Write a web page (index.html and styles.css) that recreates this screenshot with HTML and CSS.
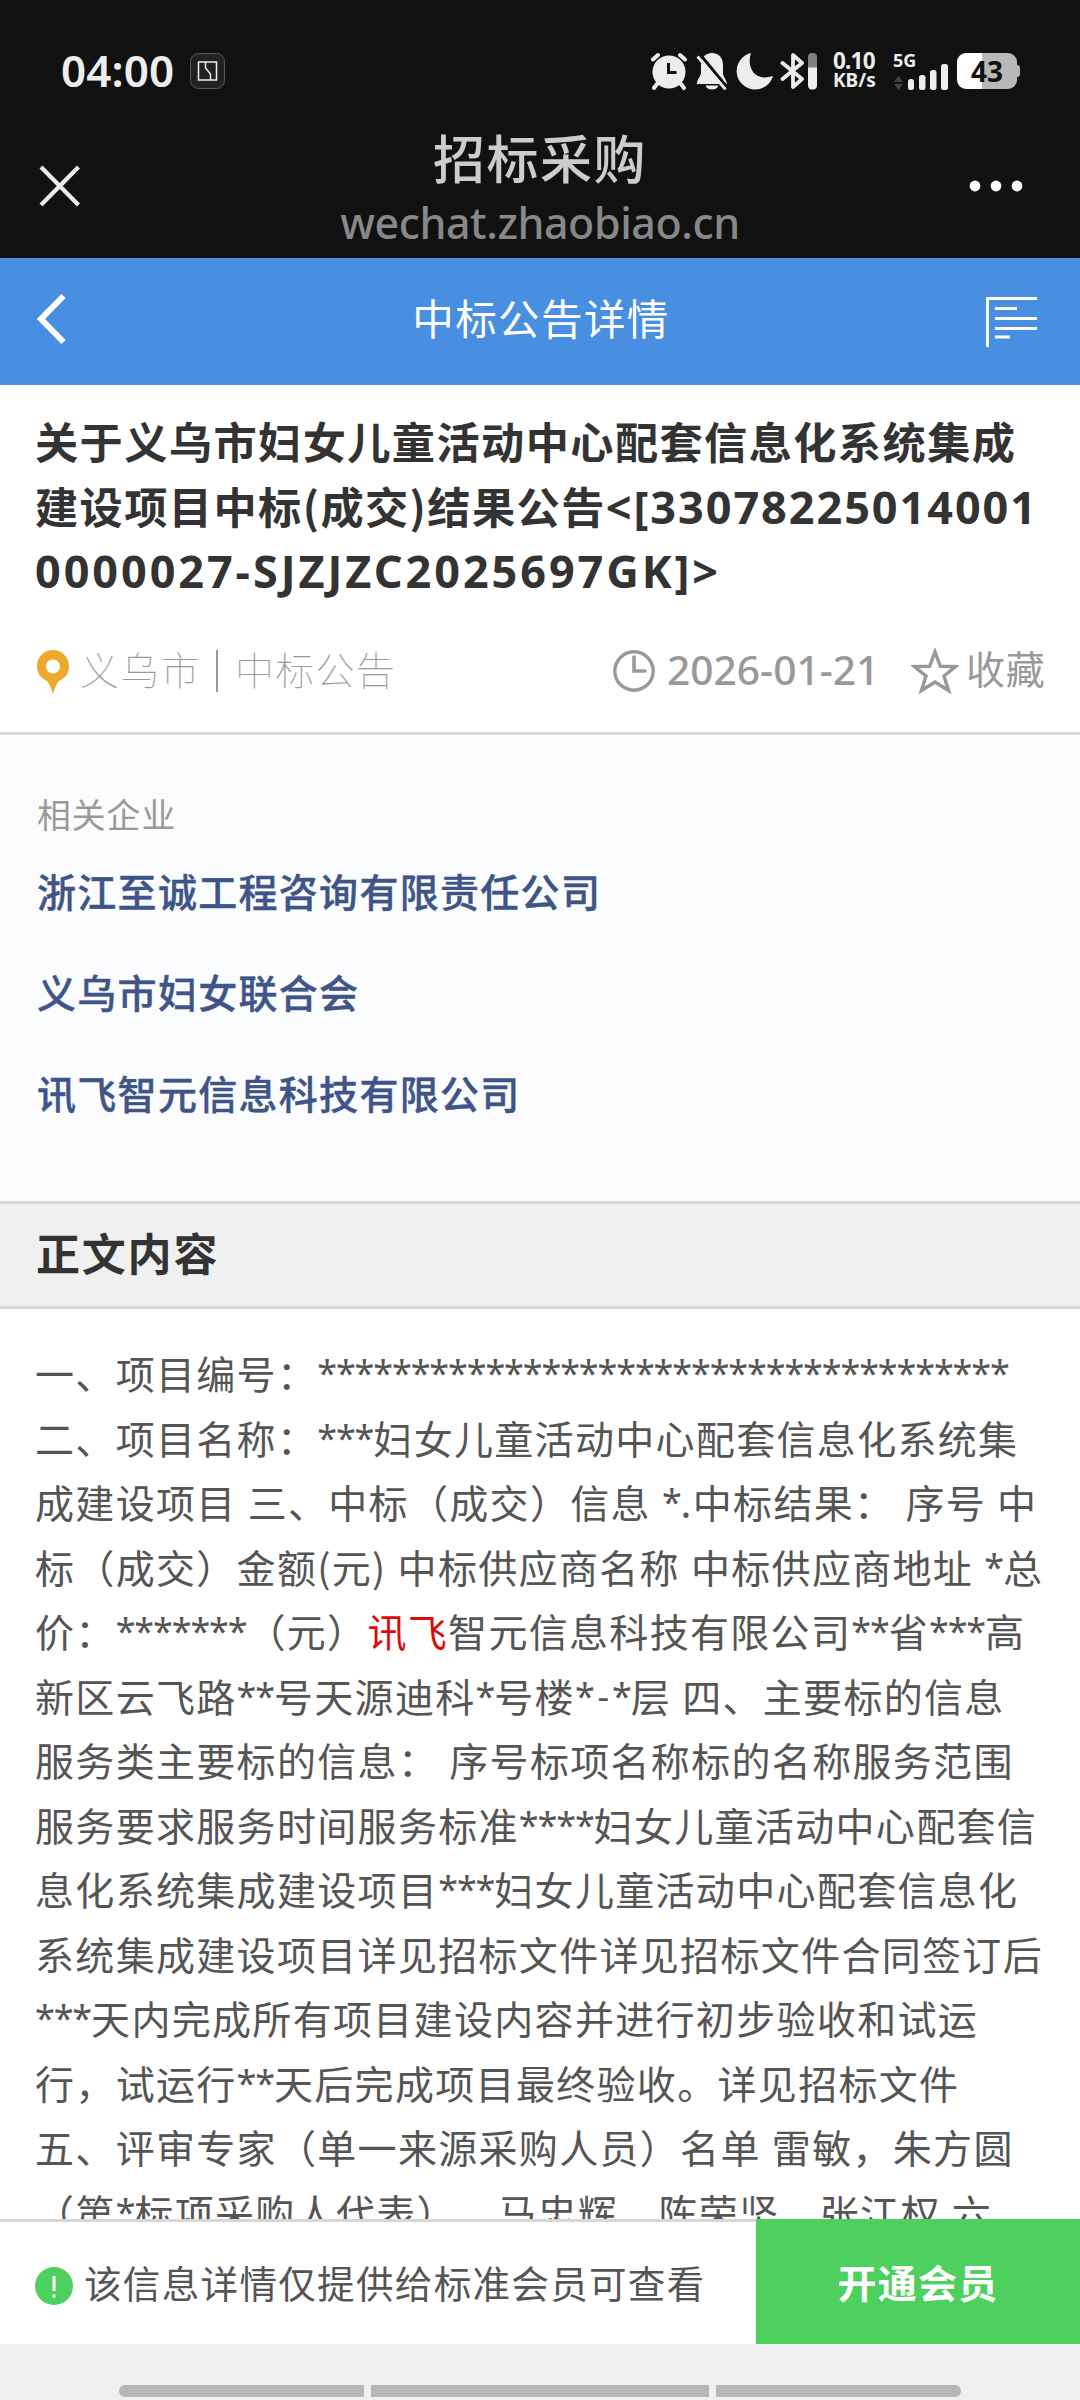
FILE: index.html
```html
<!DOCTYPE html>
<html lang="zh-CN">
<head>
<meta charset="utf-8">
<title>中标公告详情</title>
<link rel="stylesheet" href="styles.css">
</head>
<body>
<div class="phone">
  <div class="status">
    <span class="time">04:00</span>
    <svg class="badge" width="36" height="36" viewBox="0 0 36 36" fill="none"><rect x=".5" y=".5" width="34" height="35" rx="8" fill="#222" stroke="#5a5a5a"/><path d="M8.500 9h18v18h-18zM15.500 9v6l5 6v6" stroke="#eee" stroke-width="1.500"/></svg>
    <div class="tray">
      <svg width="38" height="38" viewBox="0 0 38 38" fill="none" stroke="#ededed"><circle cx="19" cy="20" r="16.500" fill="#ededed" stroke="none"/><path d="M3 7.500l5-4.500M35 7.500l-5-4.500M7 32l-3 4M31 32l3 4" stroke-width="4" stroke-linecap="round"/><path d="M18.500 11v9.500h8" stroke="#111" stroke-width="3"/></svg>
      <svg class="bell" width="32" height="38" viewBox="0 0 32 38"><path d="M16 1c7 0 11 5 11 12v8c0 4 3 5 4 11H1c0-5 3-6 4-11v-8C5 6 9 1 16 1zM9.500 33.500h13c-1 3-4 4-6.500 4s-5.500-1-6.500-4z" fill="#ededed"/><path d="M4.500 3l28 34" stroke="#111" stroke-width="3"/><path d="M1.500 4.500l28 33" stroke="#ededed" stroke-width="2.800"/></svg>
      <svg class="moon" width="38" height="38" viewBox="0 0 38 38"><path d="M15 1a18.500 18.500 0 1 0 22 23C28 27 20 25 16.500 19 13 13 13 7 15 1z" fill="#ededed"/></svg>
      <svg class="bt" width="38" height="38" viewBox="0 0 38 38" fill="none"><path d="M2.500 11l19.500 16-9 8V3l9 8L2.500 27" stroke="#ededed" stroke-width="3.800" stroke-linejoin="round" stroke-linecap="round"/><rect x="28" y="1" width="9" height="36.500" rx="4" fill="#808080"/><path d="M28 15.500h9V33a4.500 4.500 0 0 1-9 0z" fill="#ededed"/></svg>
      <div class="speed"><span>0.10</span><span class="unit">KB/s</span></div>
      <div class="signal">
        <span>5G</span>
        <svg width="56" height="38" viewBox="0 0 56 38"><path d="M1 30l4.500-6 4.500 6zM1 32l4.500 6 4.500-6z" fill="#444"/><g fill="#ededed"><rect x="15" y="27" width="6" height="11" rx="2.500"/><rect x="26" y="23" width="6.500" height="15" rx="2.500"/><rect x="37" y="18" width="6.500" height="20" rx="2.500"/><rect x="48" y="12" width="7" height="26" rx="2.500"/></g></svg>
      </div>
      <div class="battery"><span>43</span></div>
    </div>
  </div>
  <div class="wechat">
    <svg class="close" width="44" height="44" viewBox="0 0 44 44"><path d="M3 3l37.500 38M40.500 3L3 41" stroke="#ebebeb" stroke-width="4.200"/></svg>
    <div class="site"><div class="site-name">招标采购</div><div class="site-url">wechat.zhaobiao.cn</div></div>
    <svg class="more" width="56" height="12" viewBox="0 0 56 12" fill="#fff"><circle cx="7" cy="6" r="5.400"/><circle cx="28" cy="6" r="5.400"/><circle cx="49" cy="6" r="5.400"/></svg>
  </div>
  <div class="nav">
    <svg width="32" height="54" viewBox="0 0 32 54"><path d="M27.500 4L5 27l22.500 23" fill="none" stroke="#fff" stroke-width="6"/></svg>
    <h1>中标公告详情</h1>
    <svg class="menu" width="52" height="50" viewBox="0 0 52 50" fill="none" stroke="#fff"><path d="M1.500 50V1.500H51" stroke-width="2.800"/><path d="M9 11.500h22M9 21.500h42M9 31.500h42M9 40h15" stroke-width="2.800"/></svg>
  </div>
  <div class="head">
    <h2><span>关于义乌市妇女儿童活动中心配套信息化系统集成</span><span>建设项目中标(成交)结果公告<b>&lt;[33078225014001</b></span><span><b class="l3">0000027-SJZJZC2025697GK]&gt;</b></span></h2>
    <div class="meta">
      <svg class="pin" width="34" height="46" viewBox="0 0 34 46"><path fill-rule="evenodd" d="M17 1C8 1 1 8 1 17c0 8 4 12 10 15 3 3 4 7 6 13 2-6 3-10 6-13 6-3 10-7 10-15C33 8 26 1 17 1zm0 9.500a7 7 0 1 1 0 14 7 7 0 0 1 0-14z" fill="#eda92d"/></svg>
      <span class="place">义乌市<i></i>中标公告</span>
      <svg class="clock" width="42" height="44" viewBox="0 0 42 44" fill="none" stroke="#999"><circle cx="21" cy="22" r="19.200" stroke-width="3.400"/><path d="M21 8v14h11" stroke-width="3.600" stroke-linecap="round"/></svg>
      <span class="date">2026-01-21</span>
      <svg class="star" width="48" height="46" viewBox="0 0 48 46"><path d="M24 4l5.400 14.300 15.100.300-11.500 9.400 4.500 14.500L24 34l-13.500 8.500L15 28 3.500 18.600l15.100-.300z" fill="none" stroke="#999" stroke-width="3.500"/></svg>
      <span class="fav">收藏</span>
    </div>
  </div>
  <div class="related">
    <div class="label">相关企业</div>
    <a>浙江至诚工程咨询有限责任公司</a>
    <a>义乌市妇女联合会</a>
    <a>讯飞智元信息科技有限公司</a>
  </div>
  <div class="section">正文内容</div>
  <div class="content">
    <p>一、项目编号：<s>*************************************</s></p>
    <p>二、项目名称：<s>***</s>妇女儿童活动中心配套信息化系统集</p>
    <p>成建设项目 三、中标（成交）信息 <s>*</s>.中标结果： 序号 中</p>
    <p>标（成交）金额(元) 中标供应商名称 中标供应商地址 <s>*</s>总</p>
    <p>价：<s>*******</s>（元）<em>讯飞</em>智元信息科技有限公司<s>**</s>省<s>***</s>高</p>
    <p>新区云飞路<s>**</s>号天源迪科<s>*</s>号楼<s>*<u>-</u>*</s>层 四、主要标的信息</p>
    <p>服务类主要标的信息： 序号标项名称标的名称服务范围</p>
    <p>服务要求服务时间服务标准<s>****</s>妇女儿童活动中心配套信</p>
    <p>息化系统集成建设项目<s>***</s>妇女儿童活动中心配套信息化</p>
    <p>系统集成建设项目详见招标文件详见招标文件合同签订后</p>
    <p><s>***</s>天内完成所有项目建设内容并进行初步验收和试运</p>
    <p>行，试运行<s>**</s>天后完成项目最终验收。详见招标文件</p>
    <p>五、评审专家（单一来源采购人员）名单 雷敏，朱方圆</p>
    <p>（第<s>*</s>标项采购人代表），马忠辉，陈荣坚，张江权 六</p>
  </div>
  <div class="vip">
    <div class="tip"><svg width="38" height="38" viewBox="0 0 38 38"><circle cx="19" cy="19" r="19" fill="#4dd05d"/><path d="M19 9v15M19 27.500v3" stroke="#fff" stroke-width="3"/></svg><span>该信息详情仅提供给标准会员可查看</span></div>
    <div class="open">开通会员</div>
  </div>
  <div class="gesture"><i></i><i></i><i></i></div>
</div>
</body>
</html>
```
FILE: styles.css
```css
* { box-sizing: border-box; margin: 0; padding: 0; }
body { width: 1080px; height: 2400px; overflow: hidden; background: #fff; font-family: "Noto Sans CJK SC", sans-serif; text-spacing-trim: space-all; }
svg { display: block; flex: none; }
.phone { display: flex; flex-direction: column; width: 1080px; height: 2400px; white-space: nowrap; }
.phone > div { flex: none; }

.status { display: flex; align-items: center; height: 112px; padding: 30px 60px 0 61px; background: #111; color: #ededed; font-family: "Noto Sans", sans-serif; }
.time { width: 129px; font-size: 44px; font-weight: 600; line-height: 50px; letter-spacing: .1px; margin-top: -3px; }
.tray { display: flex; align-items: center; height: 38px; margin-left: auto; }
.bell { margin-left: 8px; }
.moon { margin-left: 8px; }
.bt { margin-left: 6px; }
.speed { display: flex; flex-direction: column; width: 75px; margin-top: -2px; padding-left: 15px; font-size: 22.500px; font-weight: 700; line-height: 20px; letter-spacing: -.8px; }
.unit { font-size: 19px; line-height: 19px; letter-spacing: 0; }
.signal { position: relative; width: 56px; }
.signal span { position: absolute; top: 0; left: 0; font-size: 18px; font-weight: 700; line-height: 16px; }
.battery { position: relative; width: 60px; height: 36px; margin: 0 3px 0 8px; border-radius: 9px; background: linear-gradient(90deg, #fff 25px, #b8b8b8 25px); color: #111; font-size: 28px; font-weight: 700; line-height: 36px; text-align: center; }
.battery::after { content: ""; position: absolute; right: -3px; top: 12px; width: 4px; height: 12px; border-radius: 0 3px 3px 0; background: #b8b8b8; }

.wechat { display: grid; grid-template-columns: 1fr auto 1fr; align-items: center; height: 146px; padding: 2px 56px 0 38px; background: #111; }
.site { margin-left: 18px; padding-top: 8px; text-align: center; }
.site-name { color: #ccc; font-size: 52px; font-weight: 500; line-height: 66px; letter-spacing: 1.500px; }
.site-url { color: #888; font-family: "Noto Sans", sans-serif; font-size: 43px; font-weight: 500; line-height: 66px; letter-spacing: -.450px; }
.more { justify-self: end; }

.nav { display: grid; grid-template-columns: 1fr auto 1fr; align-items: center; height: 127px; padding: 0 42px 5px 36px; background: #488fe1; color: #fff; }
.nav h1 { margin: -4px 0 0 8px; font-size: 41.500px; font-weight: 400; line-height: 60px; letter-spacing: 1.400px; }
.menu { justify-self: end; margin-top: 6px; }

.head { height: 350px; padding: 23px 36px 0 35px; border-bottom: 3px solid #d7d7d7; }
.head h2 { color: #333; font-size: 43.200px; font-weight: 700; line-height: 64.500px; letter-spacing: 1.420px; }
.head h2 span { display: block; height: 64.500px; }
.head b { font-family: "Noto Sans", sans-serif; font-size: 45px; font-weight: 700; line-height: 60px; letter-spacing: 1.950px; }
.head .l3 { letter-spacing: 2.920px; }
.meta { display: flex; align-items: center; height: 60px; margin-top: 39px; color: #999; font-size: 39px; line-height: 60px; }
.pin { margin: 3px 0 0 1px; }
.place { display: flex; align-items: center; margin: -6px 0 0 10px; font-weight: 100; letter-spacing: 1.300px; height: 54px; line-height: 54px; }
.place i { width: 2px; height: 42px; margin: 6px 17px 0 15px; background: #999; }
.clock { margin-left: auto; }
.date { width: 256px; margin-top: -3px; padding-left: 12px; font-family: "Noto Sans", sans-serif; font-size: 40.700px; font-weight: 500; }
.fav { margin-left: 7px; letter-spacing: .8px; height: 60px; line-height: 56px; width: 78px; margin-top: -3px; }

.related { display: flex; flex-direction: column; height: 469px; padding: 54px 37px 0; border-bottom: 3px solid #d7d7d7; background: #fbfcfe; }
.label { margin-bottom: 1px; color: #999; font-size: 33.800px; line-height: 50px; letter-spacing: 1px; }
.related a { color: #3f5587; font-size: 39px; font-weight: 500; line-height: 101px; letter-spacing: 1.300px; -webkit-text-stroke: .4px #3f5587; }
.section { height: 105px; padding-left: 36px; border-bottom: 3px solid #d7d7d7; background: #f0f0f0; color: #333; font-size: 44px; font-weight: 700; line-height: 96px; letter-spacing: 1.800px; }

.phone > .content { flex: 1 1 0; min-height: 0; overflow: hidden; padding: 31px 30px 0 35px; color: #555; font-size: 39px; letter-spacing: 1.320px; word-spacing: 1px; }
.content p { height: 64.500px; line-height: 64.500px; }
.content s { position: relative; top: -3px; font-family: "Noto Sans", sans-serif; font-size: 36px; line-height: 1; text-decoration: none; letter-spacing: -1.150px; }
.content u { margin: 0 4px; text-decoration: none; }
.content em { color: #d90b0b; font-style: normal; }

.vip { display: flex; height: 125px; background: #fff; }
.tip { display: flex; align-items: center; width: 756px; padding-left: 35px; border-top: 3px solid #d7d7d7; color: #555; }
.tip span { margin: -4px 0 0 11px; font-size: 37.600px; letter-spacing: 1.270px; }
.tip svg { margin-top: 6px; }
.open { width: 324px; background: #4dd05d; color: #fff; font-size: 39px; font-weight: 700; line-height: 125px; text-align: center; letter-spacing: 1.300px; }
.gesture { display: flex; gap: 7px; height: 56px; padding: 41px 119px 0; background: #f0f0f0; }
.gesture i { width: 245px; height: 12px; background: #b7b7b7; }
.gesture i:first-child { border-radius: 6px 0 0 6px; }
.gesture i:nth-child(2) { width: 338px; }
.gesture i:last-child { border-radius: 0 6px 6px 0; }
```
